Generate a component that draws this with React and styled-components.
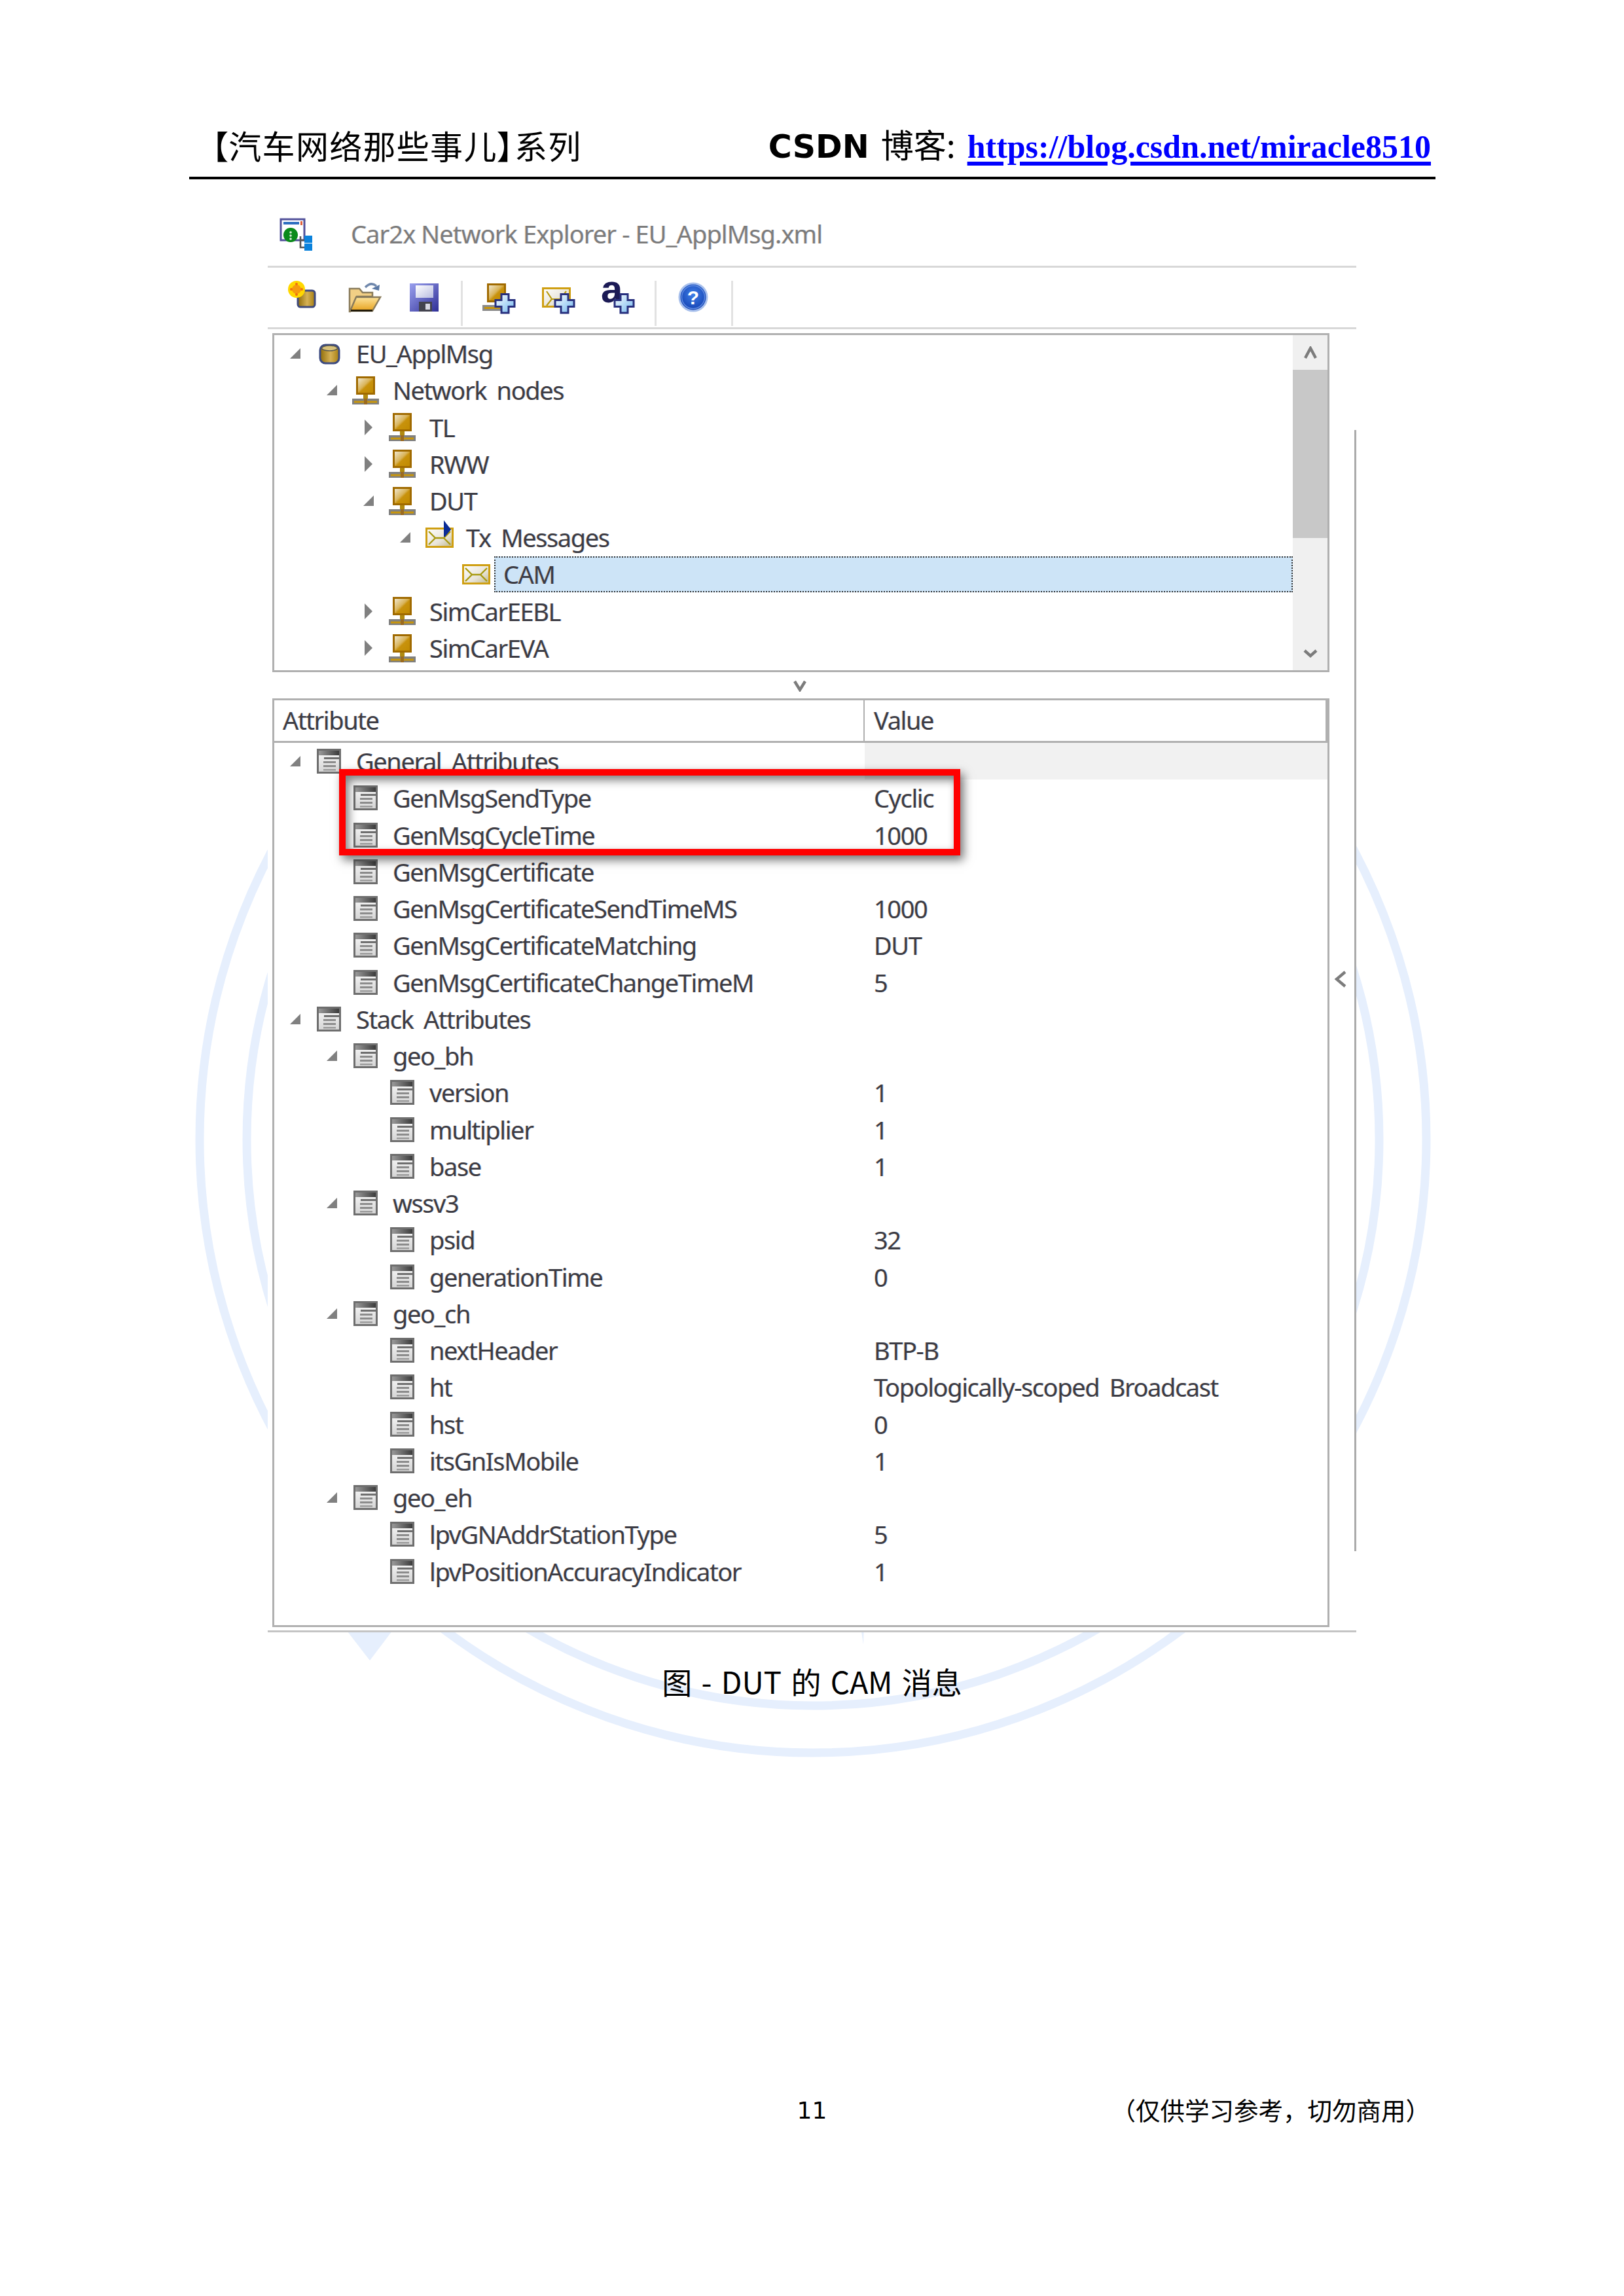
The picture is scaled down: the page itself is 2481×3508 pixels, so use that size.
import React from "react";
import styled, { createGlobalStyle } from "styled-components";

const Global = createGlobalStyle`
  html, body { margin: 0; padding: 0; background: #fff; }
`;

const CJK = `"Noto Sans CJK SC", "DejaVu Sans", sans-serif`;
const UI = `"Noto Sans", "Noto Sans CJK SC", sans-serif`;

const Page = styled.div`
  position: relative;
  width: 2481px;
  height: 3508px;
  overflow: hidden;
  background: #fff;
  display: flex;
  flex-direction: column;
`;
const Watermark = styled.svg`
  position: absolute;
  left: 0;
  top: 0;
`;
const Header = styled.header`
  position: relative;
  box-sizing: border-box;
  margin-left: 289px;
  width: 1904px;
  height: 274px;
  border-bottom: 4px solid #000;
  padding: 0 7px 15px 34px;
  display: flex;
  justify-content: space-between;
  align-items: flex-end;
`;
const SeriesTitle = styled.div`
  font: 400 50px/60px ${CJK};
  font-feature-settings: "palt";
  letter-spacing: 1.3px;
  color: #000;
  white-space: nowrap;
  margin-bottom: 4px;
`;
const Blog = styled.div`
  display: flex;
  align-items: baseline;
  white-space: nowrap;
  font: 400 50px/60px ${CJK};
  color: #000;
`;
const BlogName = styled.span`
  font: 700 49px/60px "DejaVu Sans", sans-serif;
  margin-right: 18px;
`;
const BlogColon = styled.span`
  width: 32px;
`;
const BlogLink = styled.a`
  font: 700 50px/60px "Liberation Serif", serif;
  color: #0000ff;
  text-decoration: underline;
  text-decoration-thickness: 6px;
  text-underline-offset: 6px;
`;
const Shot = styled.section`
  position: relative;
  box-sizing: border-box;
  margin: 35px 0 0 409px;
  width: 1663px;
  background: #fff;
`;
const TitleBar = styled.div`
  box-sizing: border-box;
  height: 100px;
  border-bottom: 3px solid #d8d8d8;
  padding-left: 18px;
  display: flex;
  align-items: center;
`;
const TitleText = styled.span`
  margin: 0 0 2px 57px;
  font: 400 38px/50px ${UI};
  letter-spacing: -0.9px;
  color: #7c7c7c;
  text-shadow: -1px 0 rgba(255, 170, 80, 0.25), 1px 0 rgba(70, 150, 255, 0.25);
  white-space: nowrap;
`;
const Toolbar = styled.div`
  box-sizing: border-box;
  height: 94px;
  border-bottom: 3px solid #d8d8d8;
  padding: 20px 0 0 27px;
  display: flex;
  align-items: flex-start;
`;
const ToolGroup = styled.div`
  box-sizing: content-box;
  height: 69px;
  display: flex;
  align-items: flex-start;
  gap: ${(p) => p.$gap || 0}px;
  padding: 0 ${(p) => p.$right}px 0 ${(p) => p.$left || 0}px;
  border-right: 3px solid #e2e2e2;
`;
const ToolIcon = styled.svg`
  display: block;
  width: 50px;
  height: 50px;
  overflow: visible;
  flex: none;
`;
const Body = styled.div`
  box-sizing: border-box;
  border-bottom: 3px solid #c4c4c4;
  padding: 6px 0 5px 7px;
  display: flex;
  align-items: flex-start;
`;
const Panels = styled.div`
  width: 1615px;
  flex: none;
  display: flex;
  flex-direction: column;
`;
const Panel = styled.div`
  box-sizing: border-box;
  border: 3px solid #b0b0b0;
  background: #fff;
  height: ${(p) => p.$height}px;
`;
const TreePanel = styled(Panel)`
  display: flex;
`;
const TreeList = styled.div`
  flex: 1;
  min-width: 0;
`;
const Scrollbar = styled.div`
  width: 53px;
  flex: none;
  background: #f0f0f0;
  display: flex;
  flex-direction: column;
`;
const ScrollButton = styled.div`
  height: 53px;
  flex: none;
  display: flex;
  align-items: center;
  justify-content: center;
`;
const ScrollThumb = styled.div`
  height: 257px;
  flex: none;
  background: #c8c8c8;
`;
const ScrollTrack = styled.div`
  flex: 1;
`;
const Splitter = styled.div`
  height: 40px;
  display: flex;
  align-items: center;
  justify-content: center;
  padding-right: 4px;
`;
const Row = styled.div`
  box-sizing: border-box;
  height: 56.25px;
  padding-left: ${(p) => 17 + p.$level * 56}px;
  display: flex;
  align-items: center;
  white-space: nowrap;
`;
const ArrowSlot = styled.div`
  width: 48px;
  flex: none;
  display: flex;
  align-items: center;
`;
const IconSlot = styled.div`
  width: 60px;
  flex: none;
  display: flex;
  align-items: center;
`;
const Label = styled.span`
  font: 400 38px/50px ${UI};
  letter-spacing: -1.4px;
  word-spacing: 7px;
  color: #3c3c44;
  text-shadow: -1px 0 rgba(255, 170, 80, 0.3), 1px 0 rgba(70, 150, 255, 0.3);
`;
const SelectedLabel = styled(Label)`
  flex: 1;
  box-sizing: border-box;
  height: 55px;
  line-height: 51px;
  margin-left: -13px;
  padding-left: 12px;
  background: #cde4f7;
  border: 2px dotted #333;
`;
const AttrHeader = styled.div`
  box-sizing: border-box;
  height: 65px;
  border-bottom: 3px solid #b0b0b0;
  border-right: 3px solid #b0b0b0;
  display: grid;
  grid-template-columns: 902px 1fr;
  align-items: stretch;
`;
const HeaderCell = styled(Label)`
  display: flex;
  align-items: center;
  padding: 0 0 3px ${(p) => p.$pad}px;
  border-right: ${(p) => (p.$divider ? "2px solid #b0b0b0" : "none")};
`;
const AttrRow = styled.div`
  display: grid;
  grid-template-columns: 902px 1fr;
  height: 56.25px;
`;
const ValueCell = styled(Label)`
  display: flex;
  align-items: center;
  padding-left: 14px;
  white-space: nowrap;
  background: ${(p) => (p.$shaded ? "#f1f1f1" : "transparent")};
`;
const RedFrame = styled.div`
  position: absolute;
  box-sizing: border-box;
  left: 109px;
  top: ${(p) => p.$top}px;
  width: 949px;
  height: 132px;
  border: 10px solid #ff0000;
  box-shadow: 5px 7px 14px rgba(0, 0, 0, 0.55), inset 5px 7px 14px rgba(0, 0, 0, 0.5);
`;
const SideRail = styled.div`
  box-sizing: border-box;
  margin: 148px 0 0 0;
  width: 41px;
  height: 1713px;
  flex: none;
  border-right: 3px solid #ababab;
  display: flex;
  align-items: center;
  justify-content: center;
  padding: 0 4px 36px 0;
`;
const Caption = styled.div`
  margin-top: 44px;
  text-align: center;
  font: 400 46px/60px ${CJK};
  word-spacing: 4px;
  color: #000;
  white-space: pre;
  position: relative;
`;
const Footer = styled.footer`
  position: relative;
  margin-top: auto;
  margin-bottom: 260px;
  display: grid;
  grid-template-columns: 1fr auto 1fr;
  align-items: center;
  height: 50px;
`;
const PageNumber = styled.span`
  grid-column: 2;
  font: 400 36px/50px "DejaVu Sans", sans-serif;
  color: #000;
`;
const Notice = styled.span`
  grid-column: 3;
  justify-self: end;
  margin: 0 296px 4px 0;
  font: 400 37.5px/50px ${CJK};
  color: #000;
  white-space: nowrap;
`;

const Defs = () => (
  <svg width="0" height="0" style={{ position: "absolute" }}>
    <defs>
      <linearGradient id="scr" x1="0" y1="0" x2="1" y2="1">
        <stop offset="0" stopColor="#f2eee0" />
        <stop offset="0.45" stopColor="#d9b45a" />
        <stop offset="0.55" stopColor="#c8920c" />
        <stop offset="1" stopColor="#c08a00" />
      </linearGradient>
      <linearGradient id="env" x1="0" y1="0" x2="1" y2="1">
        <stop offset="0" stopColor="#ffffff" />
        <stop offset="0.6" stopColor="#e8e4d8" />
        <stop offset="1" stopColor="#bdb68a" />
      </linearGradient>
      <linearGradient id="doc" x1="0" y1="0" x2="0" y2="1">
        <stop offset="0" stopColor="#f8f8f8" />
        <stop offset="1" stopColor="#d4d4d4" />
      </linearGradient>
      <linearGradient id="band" x1="0" y1="0" x2="1" y2="0">
        <stop offset="0" stopColor="#9a9a9a" />
        <stop offset="1" stopColor="#3c3c3c" />
      </linearGradient>
      <linearGradient id="gold" x1="0" y1="0" x2="1" y2="0">
        <stop offset="0" stopColor="#8f6c08" />
        <stop offset="0.55" stopColor="#d6b256" />
        <stop offset="1" stopColor="#a67e10" />
      </linearGradient>
      <linearGradient id="folder" x1="0" y1="0" x2="0" y2="1">
        <stop offset="0" stopColor="#fde39a" />
        <stop offset="1" stopColor="#e6a21e" />
      </linearGradient>
      <linearGradient id="floppy" x1="0" y1="0" x2="1" y2="1">
        <stop offset="0" stopColor="#9aa0ee" />
        <stop offset="1" stopColor="#2f2f96" />
      </linearGradient>
      <linearGradient id="label" x1="0" y1="0" x2="1" y2="1">
        <stop offset="0" stopColor="#fff" />
        <stop offset="1" stopColor="#b8bce0" />
      </linearGradient>
      <radialGradient id="help" cx="0.5" cy="0.4" r="0.6">
        <stop offset="0" stopColor="#3f7fe8" />
        <stop offset="1" stopColor="#123fb0" />
      </radialGradient>
      <linearGradient id="plus" x1="0" y1="0" x2="1" y2="1">
        <stop offset="0" stopColor="#ffffff" />
        <stop offset="1" stopColor="#6fb6ee" />
      </linearGradient>
    </defs>
  </svg>
);

const ExpandedArrow = () => (
  <svg width="20" height="20" viewBox="0 0 20 20" style={{ marginLeft: 6, display: "block" }}>
    <polygon points="17,2 17,18 1,18" fill="#808080" />
  </svg>
);
const CollapsedArrow = () => (
  <svg width="14" height="26" viewBox="0 0 14 26" style={{ marginLeft: 8, display: "block" }}>
    <polygon points="1,1 13,13 1,25" fill="#808080" />
  </svg>
);

const DbIcon = () => (
  <svg width="33" height="33" viewBox="0 0 33 33" style={{ marginLeft: 3, display: "block" }}>
    <rect x="2" y="3" width="29" height="28" rx="8" fill="url(#gold)" stroke="#3c4a80" strokeWidth="3" />
    <ellipse cx="16.5" cy="8" rx="12" ry="4" fill="#d9c27a" stroke="#5a5a50" strokeWidth="1.5" />
  </svg>
);
const NodeGlyph = () => (
  <>
    <rect x="7.5" y="1.5" width="26" height="25" fill="url(#scr)" stroke="#a06a00" strokeWidth="3" />
    <rect x="17" y="28" width="7" height="7" fill="#b08a10" />
    <rect x="0" y="34" width="41" height="9" fill="#808080" />
    <rect x="3" y="37.5" width="35" height="3" fill="#c8960c" />
    <rect x="18" y="34" width="5" height="9" fill="#9a6a20" />
  </>
);
const NodeIcon = () => (
  <svg width="41" height="43" viewBox="0 0 41 43" style={{ marginLeft: -2, display: "block" }}>
    <NodeGlyph />
  </svg>
);
const EnvelopeGlyph = () => (
  <>
    <rect x="1.5" y="1.5" width="40" height="28" fill="url(#env)" stroke="#cf9f12" strokeWidth="3" />
    <path d="M5 6 L15 16 L5 26 M38 6 L28 16 L38 26 M15 16 H28" fill="none" stroke="#a89a10" strokeWidth="2.4" />
  </>
);
const EnvelopeIcon = () => (
  <svg width="43" height="31" viewBox="0 0 43 31" style={{ marginLeft: -2, display: "block" }}>
    <EnvelopeGlyph />
  </svg>
);
const TxIcon = () => (
  <svg
    width="43"
    height="42"
    viewBox="0 -11 43 42"
    style={{ marginLeft: -2, marginTop: -11, display: "block" }}
  >
    <EnvelopeGlyph />
    <polygon points="28,-11 39,3 30,14 28,14" fill="#0a2c96" />
  </svg>
);
const DocIcon = () => (
  <svg width="37" height="38" viewBox="0 0 37 38" style={{ display: "block" }}>
    <rect x="1.5" y="1.5" width="34" height="35" fill="url(#doc)" stroke="#6e6e6e" strokeWidth="3" />
    <rect x="3" y="3" width="31" height="7" fill="url(#band)" />
    <rect x="11" y="13" width="23" height="3" fill="#6f6f6f" />
    <rect x="10" y="19" width="19" height="3" fill="#8c8c8c" />
    <rect x="10" y="25" width="19" height="3" fill="#8c8c8c" />
    <rect x="10" y="31" width="19" height="2.5" fill="#9c9c9c" />
  </svg>
);
const Plus = () => (
  <polygon
    points="29,20.5 40,20.5 40,29.5 49,29.5 49,39.5 40,39.5 40,49 29,49 29,39.5 20,39.5 20,29.5 29,29.5"
    fill="url(#plus)"
    stroke="#28307e"
    strokeWidth="3"
  />
);
const CHEVRONS = {
  up: { size: [22, 20], pts: "3,18 11,3 19,18" },
  down: { size: [24, 20], pts: "3,6 12,14 21,6" },
  downSmall: { size: [22, 20], pts: "3,4 11,17 19,4" },
  left: { size: [20, 28], pts: "17,3 4,14 17,25" },
};
const Chevron = ({ dir }) => {
  const { size, pts } = CHEVRONS[dir];
  return (
    <svg width={size[0]} height={size[1]} viewBox={`0 0 ${size[0]} ${size[1]}`} style={{ display: "block" }}>
      <polyline points={pts} fill="none" stroke="#7c7c7c" strokeWidth="4.4" />
    </svg>
  );
};

const ICONS = {
  db: DbIcon,
  node: NodeIcon,
  tx: TxIcon,
  env: EnvelopeIcon,
  doc: DocIcon,
};

const TreeRow = ({ level, arrow, icon, label, selected }) => {
  const Icon = ICONS[icon];
  return (
    <Row $level={level}>
      <ArrowSlot>
        {arrow === "open" && <ExpandedArrow />}
        {arrow === "closed" && <CollapsedArrow />}
      </ArrowSlot>
      <IconSlot>
        <Icon />
      </IconSlot>
      {selected ? <SelectedLabel>{label}</SelectedLabel> : <Label>{label}</Label>}
    </Row>
  );
};

const TREE = [
  { level: 0, arrow: "open", icon: "db", label: "EU_ApplMsg" },
  { level: 1, arrow: "open", icon: "node", label: "Network nodes" },
  { level: 2, arrow: "closed", icon: "node", label: "TL" },
  { level: 2, arrow: "closed", icon: "node", label: "RWW" },
  { level: 2, arrow: "open", icon: "node", label: "DUT" },
  { level: 3, arrow: "open", icon: "tx", label: "Tx Messages" },
  { level: 4, icon: "env", label: "CAM", selected: true },
  { level: 2, arrow: "closed", icon: "node", label: "SimCarEEBL" },
  { level: 2, arrow: "closed", icon: "node", label: "SimCarEVA" },
];

const ATTRS = [
  [0, "open", "General Attributes", "", true],
  [1, null, "GenMsgSendType", "Cyclic"],
  [1, null, "GenMsgCycleTime", "1000"],
  [1, null, "GenMsgCertificate", ""],
  [1, null, "GenMsgCertificateSendTimeMS", "1000"],
  [1, null, "GenMsgCertificateMatching", "DUT"],
  [1, null, "GenMsgCertificateChangeTimeM", "5"],
  [0, "open", "Stack Attributes", ""],
  [1, "open", "geo_bh", ""],
  [2, null, "version", "1"],
  [2, null, "multiplier", "1"],
  [2, null, "base", "1"],
  [1, "open", "wssv3", ""],
  [2, null, "psid", "32"],
  [2, null, "generationTime", "0"],
  [1, "open", "geo_ch", ""],
  [2, null, "nextHeader", "BTP-B"],
  [2, null, "ht", "Topologically-scoped Broadcast"],
  [2, null, "hst", "0"],
  [2, null, "itsGnIsMobile", "1"],
  [1, "open", "geo_eh", ""],
  [2, null, "lpvGNAddrStationType", "5"],
  [2, null, "lpvPositionAccuracyIndicator", "1"],
];

const AppIcon = () => (
  <svg width="52" height="50" viewBox="0 0 52 50" style={{ display: "block", flex: "none" }}>
    <rect x="2" y="2" width="36" height="32" fill="#fff" stroke="#51509a" strokeWidth="3" />
    <rect x="6" y="6" width="24" height="4" fill="#2f6fc0" />
    <rect x="32" y="5" width="3" height="6" fill="#e0603a" />
    <circle cx="17" cy="26" r="11" fill="#0a8a1a" />
    <circle cx="17" cy="22" r="1.8" fill="#d8ead8" />
    <circle cx="17" cy="27" r="1.8" fill="#d8ead8" />
    <circle cx="17" cy="32" r="1.8" fill="#d8ead8" />
    <path d="M32 28 V45 H38 M32 34 H38" fill="none" stroke="#555" strokeWidth="2.6" />
    <rect x="38" y="27" width="12" height="11" fill="#0a82dc" />
    <rect x="38" y="39" width="12" height="11" fill="#0a82dc" />
  </svg>
);

export default function App() {
  return (
    <Page>
      <Global />
      <Defs />
      <Watermark width="2481" height="3508" viewBox="0 0 2481 3508">
        <circle cx="1242" cy="1741" r="937" fill="none" stroke="#e6effd" strokeWidth="13" />
        <circle cx="1242" cy="1741" r="865" fill="none" stroke="#e6effd" strokeWidth="13" />
        <polygon points="521,2480 608,2480 565,2537" fill="#e6effd" />
        <polygon points="1314,2480 1320,2480 1319,2513" fill="#e6effd" />
      </Watermark>
      <Header>
        <SeriesTitle>【汽车网络那些事儿】系列</SeriesTitle>
        <Blog>
          <BlogName>CSDN</BlogName>
          博客
          <BlogColon>:</BlogColon>
          <BlogLink href="#">https://blog.csdn.net/miracle8510</BlogLink>
        </Blog>
      </Header>
      <Shot>
        <TitleBar>
          <AppIcon />
          <TitleText>Car2x Network Explorer - EU_ApplMsg.xml</TitleText>
        </TitleBar>
        <Toolbar>
          <ToolGroup $gap={43} $right={32}>
            <ToolIcon viewBox="0 0 50 50">
              <rect x="19" y="15" width="26" height="25" rx="4" fill="url(#gold)" stroke="#3f4a7c" strokeWidth="3" />
              <circle cx="17" cy="13" r="13" fill="#ffd800" />
              <circle cx="17" cy="13" r="7" fill="#f59a10" />
              <circle cx="17" cy="5" r="2" fill="#f07010" />
              <circle cx="9" cy="13" r="2" fill="#f07010" />
              <circle cx="25" cy="13" r="2" fill="#f07010" />
              <circle cx="17" cy="21" r="2" fill="#f07010" />
            </ToolIcon>
            <ToolIcon viewBox="0 0 50 50">
              <path d="M5 47 V12 H20 L25 18 H40 V24 H16 L6 47 Z" fill="#f2cf85" stroke="#8a7c5c" strokeWidth="2.5" />
              <polygon points="15,25 52,25 40,46 6,46" fill="url(#folder)" stroke="#8a7c5c" strokeWidth="2.5" />
              <rect x="7" y="44" width="33" height="3" fill="#221a08" />
              <path d="M29 10 Q38 1 46 8" fill="none" stroke="#7088ac" strokeWidth="3.5" />
              <polygon points="39,12 51,6 50,15" fill="#5a78a4" />
            </ToolIcon>
            <ToolIcon viewBox="0 0 50 50">
              <rect x="4" y="4" width="44" height="43" fill="url(#floppy)" />
              <rect x="13" y="7" width="27" height="19" fill="url(#label)" />
              <rect x="18" y="32" width="20" height="15" fill="#43434f" />
              <rect x="28" y="35" width="7" height="9" fill="#d8d8e4" />
            </ToolIcon>
          </ToolGroup>
          <ToolGroup $gap={41} $left={30} $right={31}>
            <ToolIcon viewBox="0 0 50 50">
              <rect x="8.5" y="5.5" width="26" height="26" fill="url(#scr)" stroke="#a06a00" strokeWidth="3" />
              <rect x="0" y="37" width="32" height="9" fill="#8a8a8a" />
              <rect x="3" y="40" width="26" height="3" fill="#c8960c" />
              <Plus />
            </ToolIcon>
            <ToolIcon viewBox="0 0 50 50">
              <rect x="1.5" y="11.5" width="41" height="28" fill="url(#env)" stroke="#cf9f12" strokeWidth="3" />
              <path d="M7 16 L15 28 L7 38 M15 28 H28 M37 16 L28 28" fill="none" stroke="#b89a10" strokeWidth="2.2" />
              <Plus />
            </ToolIcon>
            <ToolIcon viewBox="0 0 50 50">
              <text x="-1" y="33" fontFamily="'Liberation Sans', sans-serif" fontWeight="700" fontSize="60" fill="#1b1a55">
                a
              </text>
              <Plus />
            </ToolIcon>
          </ToolGroup>
          <ToolGroup $left={31} $right={33}>
            <ToolIcon viewBox="0 0 50 50">
              <circle cx="25" cy="25" r="21" fill="url(#help)" stroke="#a8c0ec" strokeWidth="3" />
              <circle cx="25" cy="25" r="17.5" fill="none" stroke="#5f8be0" strokeWidth="1.5" />
              <text
                x="25"
                y="36"
                textAnchor="middle"
                fontFamily="'Liberation Sans', sans-serif"
                fontWeight="700"
                fontSize="30"
                fill="#fff"
              >
                ?
              </text>
            </ToolIcon>
          </ToolGroup>
        </Toolbar>
        <Body>
          <Panels>
            <TreePanel $height={518}>
              <TreeList>
                {TREE.map((r) => (
                  <TreeRow key={r.label} {...r} />
                ))}
              </TreeList>
              <Scrollbar>
                <ScrollButton>
                  <Chevron dir="up" />
                </ScrollButton>
                <ScrollThumb />
                <ScrollTrack />
                <ScrollButton>
                  <Chevron dir="down" />
                </ScrollButton>
              </Scrollbar>
            </TreePanel>
            <Splitter>
              <Chevron dir="downSmall" />
            </Splitter>
            <Panel $height={1419}>
              <AttrHeader>
                <HeaderCell $pad={13} $divider>
                  Attribute
                </HeaderCell>
                <HeaderCell $pad={14}>Value</HeaderCell>
              </AttrHeader>
              {ATTRS.map(([level, arrow, label, value, shaded]) => (
                <AttrRow key={label}>
                  <TreeRow level={level} arrow={arrow} icon="doc" label={label} />
                  <ValueCell $shaded={shaded}>{value}</ValueCell>
                </AttrRow>
              ))}
            </Panel>
          </Panels>
          <SideRail>
            <Chevron dir="left" />
          </SideRail>
        </Body>
        <RedFrame $top={866} />
      </Shot>
      <Caption>{"图 - DUT 的 CAM 消息"}</Caption>
      <Footer>
        <PageNumber>11</PageNumber>
        <Notice>（仅供学习参考，切勿商用）</Notice>
      </Footer>
    </Page>
  );
}
